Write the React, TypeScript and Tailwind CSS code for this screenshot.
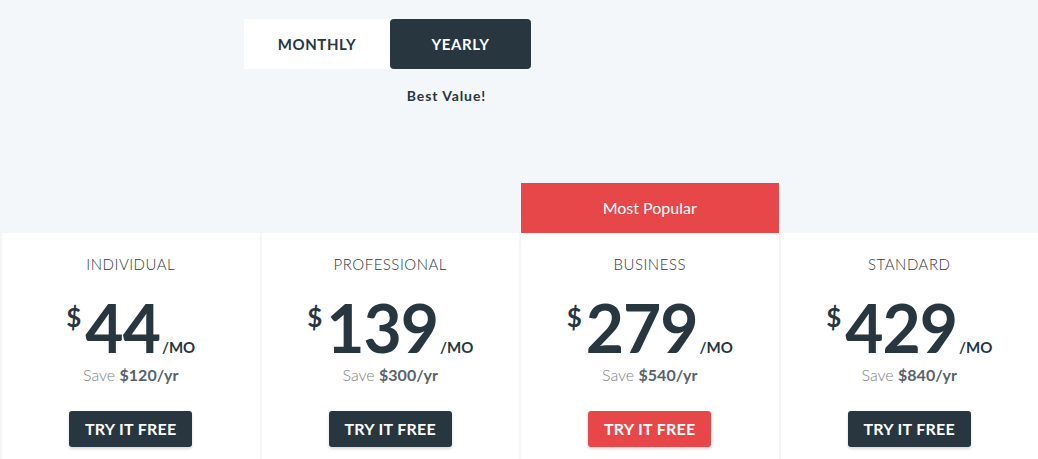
import React, { useState } from 'react';

type Plan = {
    name: string;
    price: string;
    save: string;
    popular?: boolean;
};

const plans: Plan[] = [
    { name: 'INDIVIDUAL', price: '44', save: '$120/yr' },
    { name: 'PROFESSIONAL', price: '139', save: '$300/yr' },
    { name: 'BUSINESS', price: '279', save: '$540/yr', popular: true },
    { name: 'STANDARD', price: '429', save: '$840/yr' },
];

const PlanCard: React.FC<{ plan: Plan }> = ({ plan }) => (
    <div className="flex flex-col">
        {/* banner slot keeps the cards aligned */}
        <div className="h-[50px] flex items-center justify-center">
            {plan.popular && (
                <div className="w-full h-full bg-[#e8474a] text-white text-[16px] flex items-center justify-center">
                    Most Popular
                </div>
            )}
        </div>
        <div className="bg-white flex flex-col items-center pt-[24px] pb-[12px] h-[240px]">
            <h3 className="text-[15px] tracking-[0.5px] text-[#2f383e] font-light leading-none">{plan.name}</h3>
            <div className="flex items-start mt-[28px] text-[#27363f]">
                <span className="text-[26px] font-bold leading-none mt-[4px] mr-[4px]">$</span>
                <span className="text-[66px] font-bold leading-[56px] tracking-[-1px]">{plan.price}</span>
                <span className="text-[15px] font-bold self-end leading-none ml-[2px] mb-[1px]">/MO</span>
            </div>
            <p className="mt-[11px] text-[16px] text-[#7c8287] font-light leading-none">
                Save <span className="font-bold text-[#59626a]">{plan.save}</span>
            </p>
            <button
                className={`mt-[28px] w-[123px] h-[36px] rounded-[3px] text-white font-bold text-[16px] tracking-[0.3px] shadow-[0_2px_3px_rgba(0,0,0,0.15)] ${plan.popular ? 'bg-[#e8474a]' : 'bg-[#27363f]'}`}
            >
                TRY IT FREE
            </button>
        </div>
    </div>
);

const App: React.FC = () => {
    const [billing, setBilling] = useState<'monthly' | 'yearly'>('yearly');

    return (
        <div className="h-screen bg-[#f4f7f9] font-['Lato',sans-serif] overflow-hidden">
            <div className="pt-[19px] ml-[244px] w-[287px]">
                <div className="flex bg-white h-[50px]">
                    <button
                        onClick={() => setBilling('monthly')}
                        className={`w-[146px] text-[15px] font-bold tracking-[0.6px] ${billing === 'monthly' ? 'bg-[#27363f] text-white rounded-[4px]' : 'text-[#27363f]'}`}
                    >
                        MONTHLY
                    </button>
                    <button
                        onClick={() => setBilling('yearly')}
                        className={`flex-1 text-[15px] font-bold tracking-[0.6px] ${billing === 'yearly' ? 'bg-[#27363f] text-white rounded-[4px]' : 'text-[#27363f]'}`}
                    >
                        YEARLY
                    </button>
                </div>
                <p className="pl-[118px] text-center text-[14px] font-bold text-[#27363f] mt-[16px] tracking-[0.9px]">
                    Best Value!
                </p>
            </div>

            <div className="grid grid-cols-4 gap-[2px] pl-[2px] mt-[77px]">
                {plans.map(plan => (
                    <PlanCard key={plan.name} plan={plan} />
                ))}
            </div>
        </div>
    );
};

export default App;
